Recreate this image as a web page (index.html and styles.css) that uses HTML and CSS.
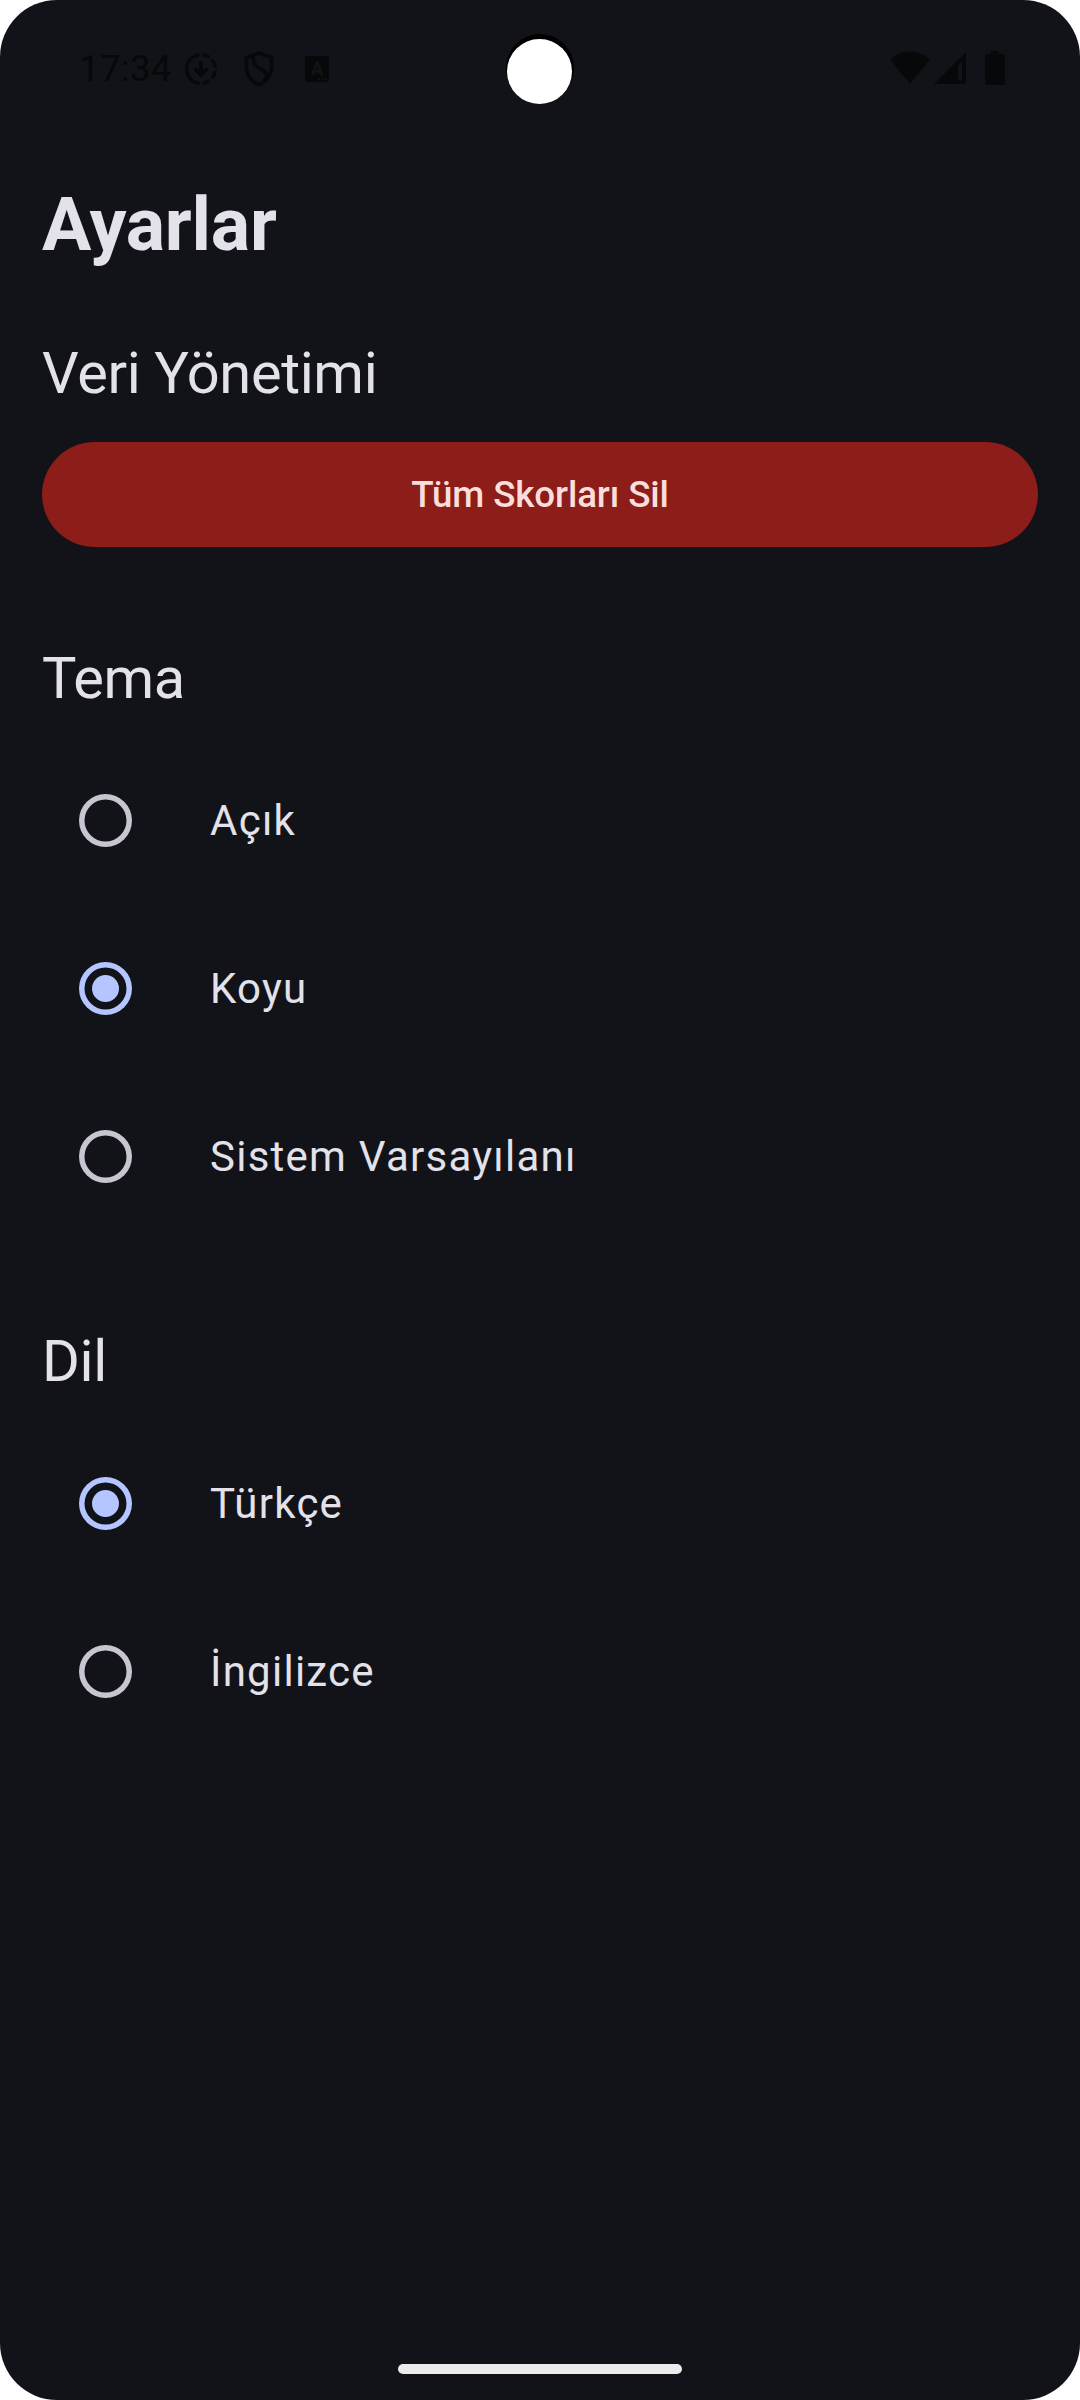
FILE: index.html
```html
<!DOCTYPE html>
<html lang="tr">
<head>
<meta charset="utf-8">
<title>Ayarlar</title>
<link rel="stylesheet" href="styles.css">
</head>
<body>
<div class="screen">
  <header class="status-bar">
    <span class="clock">17:34</span>
    <svg class="icon icon-download" viewBox="0 0 34 34" fill="none" stroke="currentColor" stroke-width="3.4">
      <path d="M15.5 2.6A14.5 14.5 0 0 0 15.5 31.4"/>
      <path d="M18.5 2.6A14.5 14.5 0 0 1 25.3 5.1M27.8 7.3A14.5 14.5 0 0 1 31.4 15.4M31.4 18.6A14.5 14.5 0 0 1 27.8 26.7M25.3 28.9A14.5 14.5 0 0 1 18.5 31.4"/>
      <path d="M17 9V22M10.5 16.5L17 23L23.5 16.5" stroke-width="3.8"/>
    </svg>
    <svg class="icon icon-shield" viewBox="0 0 30 36" fill="none" stroke="currentColor" stroke-width="3.6">
      <path d="M15 2L27.6 6.800V16C27.600 24 22.600 31 15 33.600C7.400 31 2.400 24 2.400 16V6.800Z"/>
      <path d="M9.500 4.500C7.500 20 22 16 22.500 24C22.500 26 21.500 28 20 29.500"/>
    </svg>
    <svg class="icon icon-letter" viewBox="0 0 24 26">
      <rect width="24" height="26" rx="2" fill="currentColor"/>
      <text class="letter" x="12" y="19.3" text-anchor="middle">A</text>
      <path class="dots" d="M13 22h2v2h-2zM16.500 22h2v2h-2zM20 22h2v2h-2z"/>
    </svg>
    <span class="spacer"></span>
    <svg class="icon icon-wifi" viewBox="0 0 40 33" fill="currentColor">
      <path d="M20 33L.5 9C5 4 12 .5 20 .5S35 4 39.500 9Z"/>
    </svg>
    <svg class="icon icon-signal" viewBox="0 0 32 32" fill="currentColor" fill-rule="evenodd">
      <path d="M32 0V32H0ZM28 9L24 13V28.500H28Z"/>
    </svg>
    <svg class="icon icon-battery" viewBox="0 0 20 34" fill="currentColor">
      <path d="M6 0H14V3H18A2 2 0 0 1 20 5V32A2 2 0 0 1 18 34H2A2 2 0 0 1 0 32V5A2 2 0 0 1 2 3H6Z"/>
    </svg>
    <span class="camera"></span>
  </header>

  <main class="settings">
    <h1 class="title">Ayarlar</h1>

    <section class="section">
      <h2 class="section-title">Veri Yönetimi</h2>
      <button class="delete-button" type="button">Tüm Skorları Sil</button>
    </section>

    <section class="section">
      <h2 class="section-title">Tema</h2>
      <div class="options">
        <div class="option"><span class="radio"></span><span>Açık</span></div>
        <div class="option"><span class="radio radio-on"></span><span>Koyu</span></div>
        <div class="option"><span class="radio"></span><span>Sistem Varsayılanı</span></div>
      </div>
    </section>

    <section class="section">
      <h2 class="section-title">Dil</h2>
      <div class="options">
        <div class="option"><span class="radio radio-on"></span><span>Türkçe</span></div>
        <div class="option"><span class="radio"></span><span>İngilizce</span></div>
      </div>
    </section>
  </main>

  <footer class="nav-bar"><span class="nav-handle"></span></footer>
</div>
</body>
</html>
```
FILE: styles.css
```css
* {
  box-sizing: border-box;
}

body {
  margin: 0;
  background: #fff;
  font-family: Roboto, "Liberation Sans", sans-serif;
}

.screen {
  display: flex;
  flex-direction: column;
  width: 1080px;
  height: 2400px;
  border-radius: 57px;
  background: #121318;
  color: #e3e1e9;
  overflow: hidden;
}

.status-bar {
  position: relative;
  display: flex;
  align-items: center;
  height: 136px;
  padding: 0 75px 0 79px;
  color: #070809;
}

.clock {
  width: 105px;
  margin-top: 2px;
  font-size: 36.75px;
  letter-spacing: 0.25px;
  line-height: 44px;
}

.icon {
  display: block;
  flex: none;
}

.icon-download {
  width: 34px;
  height: 34px;
  margin-top: 2px;
}

.icon-shield {
  width: 30px;
  height: 36px;
  margin: 2px 0 0 26px;
}

.icon-letter {
  width: 24px;
  height: 26px;
  margin: 2px 0 0 31px;
}

.letter {
  fill: #121318;
  stroke: #121318;
  stroke-width: 0.6px;
  font-size: 18px;
  font-weight: 700;
}

.dots {
  fill: #121318;
}

.spacer {
  flex: 1;
}

.icon-wifi {
  width: 40px;
  height: 33px;
  margin: -2px 4px 0 0;
}

.icon-signal {
  width: 32px;
  height: 32px;
  margin-right: 19px;
}

.icon-battery {
  width: 20px;
  height: 34px;
}

.camera {
  position: absolute;
  top: 34px;
  left: 506px;
  width: 68px;
  height: 68px;
  border-radius: 50%;
  background: #000;
}

.camera::after {
  content: "";
  position: absolute;
  top: 5px;
  left: 1px;
  width: 65px;
  height: 65px;
  border-radius: 50%;
  background: #fff;
}

.settings {
  flex: 1;
  padding: 42px;
}

.title {
  margin: 0 0 63px;
  font-size: 73.5px;
  font-weight: 700;
  letter-spacing: -0.2px;
  line-height: 95px;
}

.section {
  margin-bottom: 84px;
}

.section-title {
  margin: 0 0 21px;
  font-size: 57.75px;
  font-weight: 400;
  letter-spacing: -0.36px;
  line-height: 74px;
}

.delete-button {
  display: block;
  width: 100%;
  height: 105px;
  margin: 32px 0 94px;
  padding: 0;
  border: 0;
  border-radius: 53px;
  background: #8c1d18;
  color: #f9dedc;
  font-family: inherit;
  font-size: 36.75px;
  font-weight: 500;
  letter-spacing: -0.12px;
}

.option {
  display: flex;
  align-items: center;
  gap: 78px;
  height: 168px;
  padding-left: 37px;
  font-size: 42px;
  letter-spacing: 1.25px;
  line-height: 63px;
}

.radio {
  display: flex;
  align-items: center;
  justify-content: center;
  width: 53px;
  height: 53px;
  border-radius: 50%;
  box-shadow: inset 0 0 0 5.5px #c7c5d0;
}

.radio-on {
  box-shadow: inset 0 0 0 5.5px #b4c5ff;
}

.radio-on::after {
  content: "";
  width: 27px;
  height: 27px;
  border-radius: 50%;
  background: #b4c5ff;
}

.nav-bar {
  display: flex;
  justify-content: center;
  height: 36px;
}

.nav-handle {
  width: 284px;
  height: 10px;
  border-radius: 5px;
  background: #ececec;
}
```
